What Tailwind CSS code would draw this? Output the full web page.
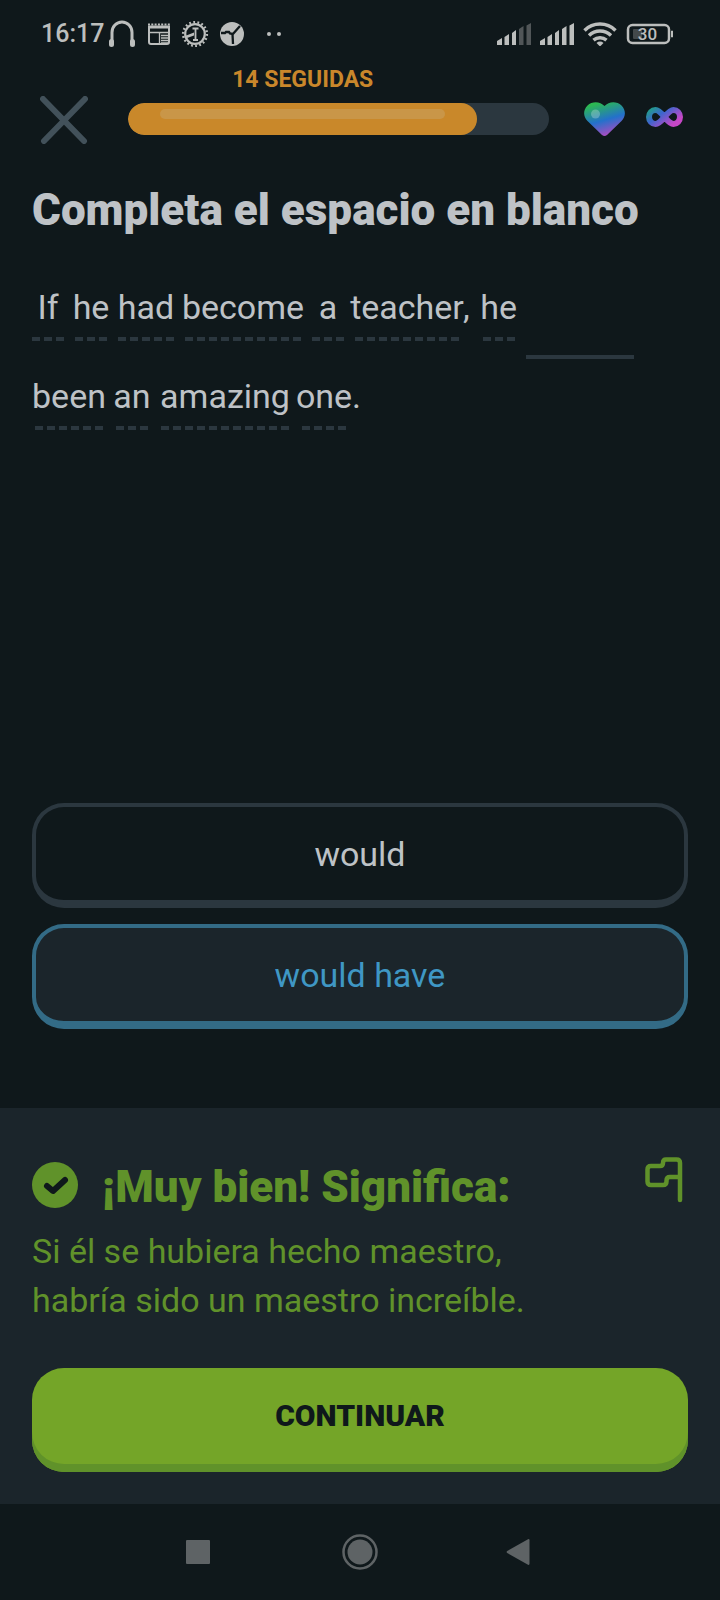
<!DOCTYPE html>
<html lang="es">
<head>
<meta charset="utf-8">
<meta name="viewport" content="width=device-width, initial-scale=1">
<title>Completa el espacio en blanco</title>
<script src="https://cdn.jsdelivr.net/npm/@tailwindcss/browser@4"></script>
</head>
<body class="flex min-h-screen flex-col bg-[#0f181b] font-['Roboto',sans-serif] text-[#bec2c6]">

<!-- Status bar -->
<div class="flex h-[68px] items-center justify-between pl-[41px] pr-[46px] text-[#bcbebd]">
  <div class="flex items-center">
    <span class="text-[25px] leading-8 font-medium">16:17</span>
    <svg class="ml-1 h-7 w-7" viewBox="0 0 28 28" fill="none" stroke="currentColor" stroke-linecap="round"><path d="M4 23V12.500a10 10.500 0 0 1 20 0V23" stroke-width="3"/><path d="M3.500 21.500v3M24.500 21.500v3" stroke-width="5"/></svg>
    <svg class="ml-[11px] h-6 w-6" viewBox="0 0 24 24" fill="none" stroke="currentColor"><path d="M2 4v16a2 2 0 0 0 2 2h16a2 2 0 0 0 2-2V4" stroke-width="2"/><path d="M1 5h22" stroke-width="3"/><path d="M1 2.500h22" stroke-width="2" stroke-dasharray="2 1.300"/><path d="M2 10.500h20M12.500 11v11" stroke-width="1.300"/><path d="M14 13.500h8M14 16h8M14 18.500h8M14 21h8" stroke-width="1.300"/></svg>
    <svg class="ml-[10px] h-7 w-7" viewBox="0 0 28 28" fill="none" stroke="currentColor"><circle cx="14" cy="14" r="9.800" stroke-width="2.200"/><circle cx="14" cy="14" r="11.900" stroke-width="2.400" stroke-dasharray="1.800 2.353"/><path d="M11.500 8.500h6M14.500 8.500V20M12 20h5" stroke-width="1.800"/><path d="M4 16l9-3.500v3L6 18z" fill="currentColor" stroke="none"/></svg>
    <svg class="ml-[10px] h-[26px] w-[26px]" viewBox="0 0 26 26"><circle cx="13" cy="13" r="12" fill="currentColor"/><path d="M2 12h4l1-1h3l1 1.500 3 .5M13.500 13l.5 10M13.500 13.500L21 5" fill="none" stroke="#0f181b" stroke-width="2.300"/></svg>
    <svg class="ml-5 h-4 w-[18px]" viewBox="0 0 18 16" fill="currentColor"><circle cx="4" cy="8" r="2"/><circle cx="14" cy="8" r="2"/></svg>
  </div>
  <div class="flex items-center">
    <svg class="h-6 w-[34px]" viewBox="0 0 34 24" fill="currentColor"><path d="M0 23v-4l5-3v7zM7.500 23v-8l4.500-3v11zM15 23V11l4-3v15z"/><path d="M22 23V7l4.500-3v19zM29.500 23V3.500L34 1v22z" opacity=".38"/></svg>
    <svg class="ml-[9px] h-6 w-[34px]" viewBox="0 0 34 24" fill="currentColor"><path d="M0 23v-4l5-3v7zM7.500 23v-8l4.500-3v11zM15 23V11l4-3v15zM22 23V7l4.500-3v19zM29.500 23V3.500L34 1v22z"/></svg>
    <svg class="ml-[9px] h-6 w-[34px]" viewBox="0 0 34 24" fill="none" stroke="currentColor" stroke-width="3.500"><path d="M1.500 8.500a22 22 0 0 1 31 0M6 13.500a16 16 0 0 1 22 0M10.500 18.200a10 10 0 0 1 13 0"/><path d="M17 24.500l-3.500-3.500a5 5 0 0 1 7 0z" fill="currentColor" stroke="none"/></svg>
    <svg class="ml-[9px] h-[22px] w-[48px]" viewBox="0 0 48 22"><rect x="2" y="2" width="41" height="18" rx="4.500" fill="none" stroke="currentColor" stroke-width="2.500"/><path d="M45.500 8v6h1V8z" fill="currentColor" stroke="currentColor"/><rect x="7" y="6" width="9" height="10" rx="1" fill="#43494b"/><text x="21.500" y="17" text-anchor="middle" font-family="Roboto, sans-serif" font-size="17" font-weight="500" fill="currentColor">30</text></svg>
  </div>
</div>

<!-- Lesson header -->
<header class="flex items-end pl-10 pr-[37px]">
  <button type="button" aria-label="Cerrar" class="h-12 w-12 shrink-0"><svg viewBox="0 0 48 48" class="h-12 w-12" fill="none" stroke="#42515a" stroke-width="6" stroke-linecap="round"><path d="M3 3l41 42M45 3L4 45"/></svg></button>
  <div class="ml-10 flex-1 pb-[9px]">
    <div class="w-[83%] text-center text-[23px] leading-6 font-bold text-[#c9872b]">14 SEGUIDAS</div>
    <div role="progressbar" aria-label="Progreso" aria-valuenow="83" class="mt-[11px] h-8 overflow-hidden rounded-full bg-[#2b373f]">
      <div class="h-full rounded-full bg-[#c9882a] px-8 pt-[6px]" style="width:83%"><div class="h-[10px] rounded-full bg-[#c99648]"></div></div>
    </div>
  </div>
  <svg class="mb-2 ml-[35px] h-[34px] w-[41px] shrink-0" viewBox="0 0 41 34"><defs><linearGradient id="heart" x1=".25" y1="0" x2=".6" y2="1"><stop offset=".05" stop-color="#2cb951"/><stop offset=".55" stop-color="#2371cb"/><stop offset="1" stop-color="#b24ac0"/></linearGradient></defs><path d="M20.500 4C25-1 33-1 37.500 3.500c4.500 4.500 4.500 11 0 15.500L23 33q-2.500 2-5 0L3.500 19C-1 14.500-1 8 3.500 3.500 8-1 16-1 20.500 4z" fill="url(#heart)"/><circle cx="11.500" cy="12" r="4.500" fill="#fff" opacity=".25"/></svg>
  <svg class="mb-4 ml-[21px] h-[22px] w-[37px] shrink-0" viewBox="0 0 37 22" role="img" aria-label="Vidas infinitas"><defs><linearGradient id="inf" x1="0" y1="0" x2="1" y2=".6"><stop offset="0" stop-color="#229c8c"/><stop offset=".4" stop-color="#3c66cd"/><stop offset="1" stop-color="#c647c6"/></linearGradient></defs><path d="M18.500 11C14 5.500 12 4 9.500 4a6.500 7 0 0 0 0 14c2.500 0 4.500-1.500 9-7s6.500-7 9-7a6.500 7 0 0 1 0 14c-2.500 0-4.500-1.500-9-7z" fill="none" stroke="url(#inf)" stroke-width="6"/></svg>
</header>

<!-- Exercise -->
<main class="flex flex-1 flex-col justify-between px-8 pt-[38px] pb-[79px]">
  <div>
    <h1 class="text-[44px] leading-[56px] font-black">Completa el espacio en blanco</h1>
    <div class="mt-[49px] text-[34px] leading-[40px] whitespace-nowrap">
      <div class="flex items-start gap-[11px]">
        <span class="flex w-8 flex-col items-center gap-[10px]">If<i class="h-1 w-full bg-[repeating-linear-gradient(90deg,#2b373f_0_8px,transparent_8px_12px)]"></i></span>
        <span class="flex w-8 flex-col items-center gap-[10px]">he<i class="h-1 w-full bg-[repeating-linear-gradient(90deg,#2b373f_0_8px,transparent_8px_12px)]"></i></span>
        <span class="flex w-14 flex-col items-center gap-[10px]">had<i class="h-1 w-full bg-[repeating-linear-gradient(90deg,#2b373f_0_8px,transparent_8px_12px)]"></i></span>
        <span class="flex w-[116px] flex-col items-center gap-[10px]">become<i class="h-1 w-full bg-[repeating-linear-gradient(90deg,#2b373f_0_8px,transparent_8px_12px)]"></i></span>
        <span class="flex w-8 flex-col items-center gap-[10px]">a<i class="h-1 w-full bg-[repeating-linear-gradient(90deg,#2b373f_0_8px,transparent_8px_12px)]"></i></span>
        <span class="flex"><span class="flex w-[104px] flex-col items-center gap-[10px]">teacher<i class="h-1 w-full bg-[repeating-linear-gradient(90deg,#2b373f_0_8px,transparent_8px_12px)]"></i></span><span class="ml-1">,</span></span>
        <span class="ml-[2px] flex w-8 flex-col items-center gap-[10px]">he<i class="h-1 w-full bg-[repeating-linear-gradient(90deg,#2b373f_0_8px,transparent_8px_12px)]"></i></span>
        <span role="img" aria-label="espacio en blanco" class="mt-[68px] h-1 w-[108px] bg-[#2b373f]"></span>
      </div>
      <div class="mt-[17px] flex items-start gap-[13px] pl-[3px]">
        <span class="flex w-[68px] flex-col items-center gap-[10px]">been<i class="h-1 w-full bg-[repeating-linear-gradient(90deg,#2b373f_0_8px,transparent_8px_12px)]"></i></span>
        <span class="flex w-8 flex-col items-center gap-[10px]">an<i class="h-1 w-full bg-[repeating-linear-gradient(90deg,#2b373f_0_8px,transparent_8px_12px)]"></i></span>
        <span class="flex w-32 flex-col items-center gap-[10px]">amazing<i class="h-1 w-full bg-[repeating-linear-gradient(90deg,#2b373f_0_8px,transparent_8px_12px)]"></i></span>
        <span class="flex"><span class="flex w-11 flex-col items-center gap-[10px]">one<i class="h-1 w-full bg-[repeating-linear-gradient(90deg,#2b373f_0_8px,transparent_8px_12px)]"></i></span><span class="ml-[6px]">.</span></span>
      </div>
    </div>
  </div>
  <div class="flex flex-col gap-4">
    <button type="button" class="h-[105px] rounded-[32px] border-4 border-b-8 border-[#2b373f] text-[34px] leading-[40px]">would</button>
    <button type="button" aria-pressed="true" class="h-[105px] rounded-[32px] border-4 border-b-8 border-[#336b86] bg-[#1b252b] text-[34px] leading-[40px] text-[#3f97c4]">would have</button>
  </div>
</main>

<!-- Feedback -->
<section class="bg-[#1b252b] px-8 pt-[46px] pb-8 text-[#60922a]">
  <div class="flex items-start">
    <svg class="mt-2 h-[46px] w-[46px] shrink-0" viewBox="0 0 46 46"><circle cx="23" cy="23" r="23" fill="currentColor"/><path d="M15 24l6 5 12-11" fill="none" stroke="#0f181b" stroke-width="6" stroke-linecap="round" stroke-linejoin="round"/></svg>
    <h2 class="ml-6 flex-1 pt-[5px] text-[44px] leading-[56px] font-black">¡Muy bien! Significa:</h2>
    <button type="button" aria-label="Reportar" class="mt-[2px] mr-[5px]"><svg class="h-[47px] w-[38px]" viewBox="0 0 38 47" fill="none" stroke="currentColor" stroke-width="4.500" stroke-linecap="round" stroke-linejoin="round"><path d="M35 44V7q0-3.500-3.500-3.500H21q-3 0-3 3.500 0 3-3 3H6q-3.500 0-3.500 3.500v12q0 3.500 3.500 3.500h12q3.500 0 3.500-3.500v-1q0-3.500 3.500-3.500h10"/></svg></button>
  </div>
  <p class="mt-3 text-[34px] leading-[49px]">Si él se hubiera hecho maestro,<br>habría sido un maestro increíble.</p>
  <button type="button" class="mt-[43px] h-[104px] w-full rounded-[32px] bg-[#74a528] pb-2 text-[30px] leading-9 font-black text-[#0f181b] shadow-[inset_0_-8px_0_#60922a]">CONTINUAR</button>
</section>

<!-- System navigation -->
<nav class="flex h-24 items-center justify-center gap-[128px] pr-1 text-[#5e6365]">
  <button type="button" aria-label="Recientes" class="mr-1"><svg class="h-6 w-6" viewBox="0 0 24 24" fill="currentColor"><rect width="24" height="24" rx="1"/></svg></button>
  <button type="button" aria-label="Inicio"><svg class="h-9 w-9" viewBox="0 0 36 36" fill="currentColor"><circle cx="18" cy="18" r="16.500" fill="none" stroke="currentColor" stroke-width="2.500"/><circle cx="18" cy="18" r="12.500"/></svg></button>
  <button type="button" aria-label="Atrás"><svg class="h-7 w-6" viewBox="0 0 24 28" fill="currentColor"><path d="M22 1.200L1.200 13q-1.200 1 0 2L22 26.800q1.500.5 1.500-1V2.200q0-1.500-1.500-1z"/></svg></button>
</nav>
</body>
</html>
